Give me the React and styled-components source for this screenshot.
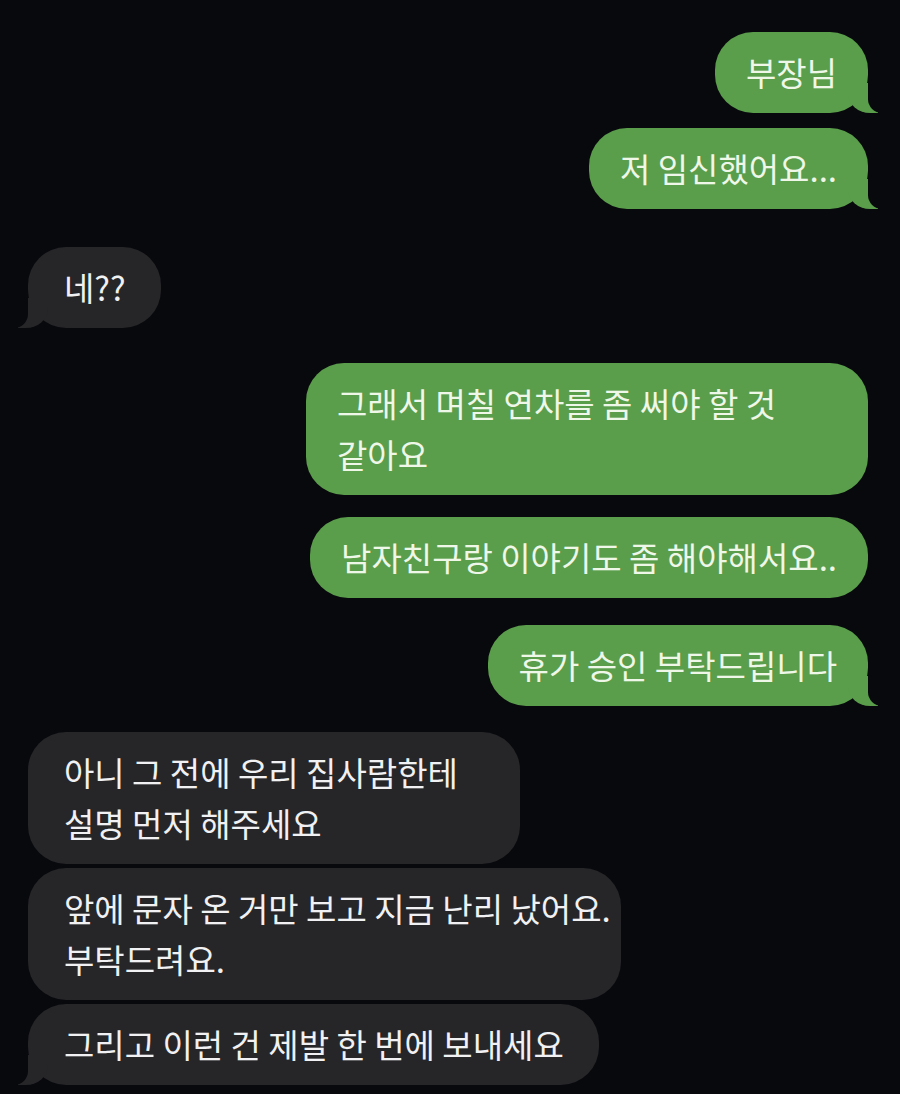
import React from 'react'
import styled, { createGlobalStyle, css } from 'styled-components';

const PAGE_BG = '#08090d';
const GREEN = '#5a9d4b';
const GRAY = '#262629';

const messages = [
  { me: true, lines: ['부장님'], tail: true, gap: 32 },
  { me: true, lines: ['저 임신했어요...'], tail: true, gap: 15 },
  { me: false, lines: ['네??'], tail: true, gap: 38 },
  { me: true, lines: ['그래서 며칠 연차를 좀 써야 할 것', '같아요'], width: 562, gap: 35 },
  { me: true, lines: ['남자친구랑 이야기도 좀 해야해서요..'], gap: 22 },
  { me: true, lines: ['휴가 승인 부탁드립니다'], tail: true, gap: 27 },
  { me: false, lines: ['아니 그 전에 우리 집사람한테', '설명 먼저 해주세요'], width: 492, gap: 26 },
  { me: false, lines: ['앞에 문자 온 거만 보고 지금 난리 났어요.', '부탁드려요.'], width: 593, gap: 4 },
  { me: false, lines: ['그리고 이런 건 제발 한 번에 보내세요'], tail: true, gap: 4 },
];

const App = () => {
  return (
    <>
      <GlobalStyle />
      <Chat>
        {messages.map((m, i) => (
          <Row key={i} $me={m.me} $gap={m.gap}>
            <Bubble $me={m.me} $tail={m.tail} $width={m.width}>
              {m.lines.map((line, j) => (
                <Line key={j}>{line}</Line>
              ))}
            </Bubble>
          </Row>
        ))}
      </Chat>
    </>
  )
}

const GlobalStyle = createGlobalStyle`
  html, body {
    margin: 0;
    padding: 0;
    background: ${PAGE_BG};
  }
  body {
    font-family: "Noto Sans CJK KR", "Noto Sans", sans-serif;
  }
`

const Chat = styled.div`
  width: 900px;
  min-height: 1094px;
  box-sizing: border-box;
  padding: 0 32px 0 28px;
  display: flex;
  flex-direction: column;
  background: ${PAGE_BG};
`

const Row = styled.div`
  display: flex;
  justify-content: ${p => (p.$me ? 'flex-end' : 'flex-start')};
  margin-top: ${p => p.$gap}px;
`

const tailRight = css`
  &::before {
    content: "";
    position: absolute;
    bottom: 0;
    right: -10px;
    width: 30px;
    height: 30px;
    background: ${GREEN};
    border-bottom-left-radius: 22px 20px;
  }
  &::after {
    content: "";
    position: absolute;
    bottom: 0;
    right: -16px;
    width: 16px;
    height: 30px;
    background: ${PAGE_BG};
    border-bottom-left-radius: 14px;
  }
`

const tailLeft = css`
  &::before {
    content: "";
    position: absolute;
    bottom: 0;
    left: -10px;
    width: 30px;
    height: 30px;
    background: ${GRAY};
    border-bottom-right-radius: 22px 20px;
  }
  &::after {
    content: "";
    position: absolute;
    bottom: 0;
    left: -16px;
    width: 16px;
    height: 30px;
    background: ${PAGE_BG};
    border-bottom-right-radius: 14px;
  }
`

const Bubble = styled.div`
  position: relative;
  box-sizing: border-box;
  width: ${p => (p.$width ? `${p.$width}px` : 'auto')};
  padding: 15px ${p => (p.$me ? '31px 15px 31px' : '35px 15px 36px')};
  border-radius: 38px;
  background: ${p => (p.$me ? GREEN : GRAY)};
  color: ${p => (p.$me ? '#eef7e8' : '#f1f1f3')};
  font-size: 33px;
  line-height: 51px;
  ${p => p.$tail && (p.$me ? tailRight : tailLeft)}
`

const Line = styled.div`
  position: relative;
  z-index: 1;
  white-space: nowrap;
`

export default App
